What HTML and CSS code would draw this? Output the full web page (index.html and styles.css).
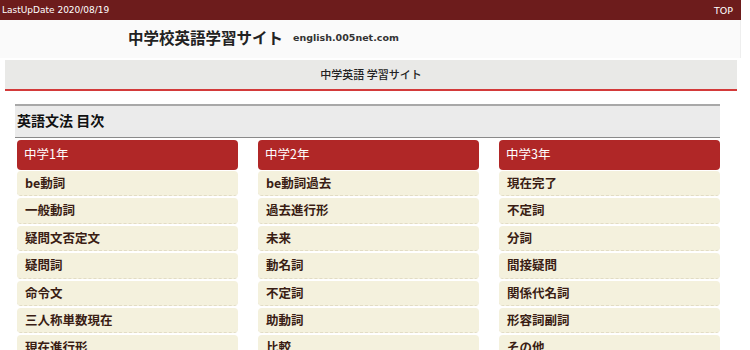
FILE: index.html
```html
<!DOCTYPE html>
<html lang="ja">
<head>
    <meta charset="UTF-8">
    <title>中学校英語学習サイト</title>
    <link rel="stylesheet" href="styles.css">
</head>
<body>
    <div class="page">
        <div class="topbar">
            <span>LastUpDate 2020/08/19</span>
            <a href="#">TOP</a>
        </div>

        <div class="header">
            <h1>中学校英語学習サイト</h1>
            <span class="domain">english.005net.com</span>
        </div>

        <div class="nav">中学英語 学習サイト</div>

        <div class="index">
            <h2>英語文法 目次</h2>
            <div class="cols">
                <div class="col">
                    <div class="grade">中学1年</div>
                    <a class="item" href="#">be動詞</a>
                    <a class="item" href="#">一般動詞</a>
                    <a class="item" href="#">疑問文否定文</a>
                    <a class="item" href="#">疑問詞</a>
                    <a class="item" href="#">命令文</a>
                    <a class="item" href="#">三人称単数現在</a>
                    <a class="item" href="#">現在進行形</a>
                </div>
                <div class="col">
                    <div class="grade">中学2年</div>
                    <a class="item" href="#">be動詞過去</a>
                    <a class="item" href="#">過去進行形</a>
                    <a class="item" href="#">未来</a>
                    <a class="item" href="#">動名詞</a>
                    <a class="item" href="#">不定詞</a>
                    <a class="item" href="#">助動詞</a>
                    <a class="item" href="#">比較</a>
                </div>
                <div class="col">
                    <div class="grade">中学3年</div>
                    <a class="item" href="#">現在完了</a>
                    <a class="item" href="#">不定詞</a>
                    <a class="item" href="#">分詞</a>
                    <a class="item" href="#">間接疑問</a>
                    <a class="item" href="#">関係代名詞</a>
                    <a class="item" href="#">形容詞副詞</a>
                    <a class="item" href="#">その他</a>
                </div>
            </div>
        </div>
    </div>
</body>
</html>
```

FILE: styles.css
```css
body {
    margin: 0;
    background: #fff;
    font-family: "Noto Sans CJK JP", "DejaVu Sans", sans-serif;
    color: #222;
}
a {
    text-decoration: none;
}
.page {
    width: 741px;
}
.topbar {
    height: 20px;
    background: #6d1c1c;
    color: #fff;
    font-family: "DejaVu Sans", "Noto Sans CJK JP", sans-serif;
    font-size: 9px;
    display: flex;
    justify-content: space-between;
    align-items: center;
    padding: 0 8px 0 2px;
}
.topbar a {
    color: #fff;
    font-size: 9.5px;
}
.header {
    height: 38px;
    box-sizing: border-box;
    background: #fafafa;
    border-right: 1px solid #eee;
    display: flex;
    align-items: center;
    padding: 0 0 5px 128px;
}
.header h1 {
    margin: 0;
    font-size: 15.5px;
    font-weight: bold;
    color: #222;
}
.domain {
    margin-left: 10px;
    margin-top: 2px;
    font-family: "DejaVu Sans", sans-serif;
    font-size: 9.5px;
    font-weight: bold;
    color: #333;
}
.nav {
    margin: 2px 4px 0 5px;
    height: 29px;
    line-height: 29px;
    background: #e9e9e7;
    border-bottom: 2px solid #d33a3a;
    text-align: center;
    font-size: 11px;
    font-weight: 500;
    color: #222;
}
.index {
    margin: 13px 21px 0 15px;
}
.index h2 {
    margin: 0;
    height: 31px;
    line-height: 29px;
    padding-left: 2px;
    background: #ebebeb;
    border-top: 2px solid #a8a8a8;
    border-bottom: 1px solid #8a8a8a;
    font-size: 14px;
    font-weight: bold;
    color: #111;
}
.cols {
    display: grid;
    grid-template-columns: repeat(3, 1fr);
    gap: 20px;
    margin: 2px 0 0 2px;
}
.col {
    display: flex;
    flex-direction: column;
}
.grade {
    height: 30px;
    line-height: 27px;
    padding-left: 7px;
    background: #b02727;
    color: #fff;
    font-size: 12.5px;
    border-radius: 4px;
    margin-bottom: 1px;
}
.item {
    height: 25.4px;
    line-height: 23px;
    padding-left: 8px;
    margin-bottom: 2px;
    background: #f4f1dd;
    border-bottom: 1px dashed #e2dcc4;
    border-radius: 4px;
    font-size: 12.5px;
    font-weight: bold;
    color: #3a1d14;
    box-sizing: border-box;
}
```
